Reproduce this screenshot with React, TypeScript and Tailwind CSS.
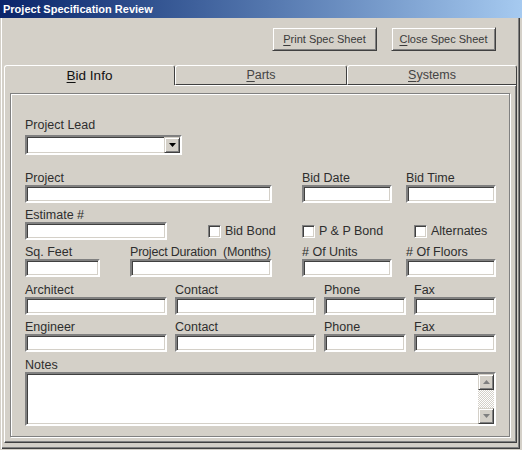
import React from "react";

const U = ({ c }: { c: string }) => (
  <span className="underline underline-offset-[2px] decoration-[1px]">{c}</span>
);

const sunken =
  "bg-white border-2 border-t-[#808080] border-l-[#808080] border-b-white border-r-white shadow-[inset_1px_1px_0_#404040,inset_-1px_-1px_0_#d4d0c8]";

const raised =
  "bg-[#d4d0c8] border border-t-[#d4d0c8] border-l-[#d4d0c8] border-b-[#404040] border-r-[#404040] shadow-[inset_1px_1px_0_#fff,inset_-1px_-1px_0_#808080]";

function Field({ label, cls, lcls = "" }: { label: string; cls: string; lcls?: string }) {
  return (
    <div className={"flex flex-col " + cls}>
      <span className={"h-[14px] leading-[14px] whitespace-pre " + lcls}>{label}</span>
      <div className={"h-[18px] w-full " + sunken} />
    </div>
  );
}

function Check({ label, cls }: { label: string; cls: string }) {
  return (
    <div className={"flex items-center h-[18px] " + cls}>
      <div className="w-[13px] h-[13px] bg-white border border-t-[#808080] border-l-[#808080] border-b-white border-r-white shadow-[inset_1px_1px_0_#404040,inset_-1px_-1px_0_#d4d0c8]" />
      <span className="ml-[4px] leading-[14px] whitespace-nowrap">{label}</span>
    </div>
  );
}

function Arrow({ up, color }: { up?: boolean; color: string }) {
  return (
    <svg width="7" height="4" viewBox="0 0 7 4" className="block">
      {up ? (
        <polygon points="3.5,0 7,4 0,4" fill={color} />
      ) : (
        <polygon points="0,0 7,0 3.5,4" fill={color} />
      )}
    </svg>
  );
}

export default function App() {
  return (
    <div className="w-[522px] h-[450px] bg-[#d4d0c8] font-['Liberation_Sans',Arial,sans-serif] text-[12.5px] text-[#2e2e2e] overflow-hidden">
      <div className="h-[18px] w-[522px] bg-linear-to-r from-[#0a246a] to-[#a6caf0] flex items-center pl-[3px] text-white font-bold text-[11px] leading-[18px]">
        Project Specification Review
      </div>
      <div className="w-[520px] h-[431px] flex flex-col shadow-[inset_1px_0_0_#d4d0c8,inset_2px_0_0_#fff,inset_-1px_-1px_0_#404040,inset_-2px_-2px_0_#808080]">
        {/* buttons */}
        <div className="flex justify-end gap-[14px] pr-[24px] mt-[9px]">
          <button className={"w-[105px] h-[24px] flex items-center justify-center text-[11px] text-[#3a3a3a] " + raised}>
            <U c="P" />rint Spec Sheet
          </button>
          <button className={"w-[105px] h-[24px] flex items-center justify-center text-[11px] text-[#3a3a3a] " + raised}>
            <U c="C" />lose Spec Sheet
          </button>
        </div>
        {/* tabs */}
        <div className="flex ml-[4px] mt-[14px] h-[20px]">
          <div className="w-[171px] h-[20px] border-l border-t border-r border-l-white border-t-white border-r-[#404040] rounded-t-[3px] flex items-center justify-center text-[13.5px] text-[#111] pt-[1px]">
            <U c="B" />id Info
          </div>
          <div className="w-[172px] h-[20px] border border-l-white border-t-white border-r-[#404040] border-b-[#404040] rounded-t-[3px] flex items-center justify-center text-[#444] pt-[1px]">
            <U c="P" />arts
          </div>
          <div className="w-[170px] h-[20px] border border-l-white border-t-white border-r-[#404040] border-b-[#404040] rounded-t-[3px] flex items-center justify-center text-[#444] pt-[1px]">
            <U c="S" />ystems
          </div>
        </div>
        {/* panel */}
        <div className="ml-[4px] w-[513px] h-[358px] border-l border-r border-b border-l-white border-r-[#404040] border-b-[#404040] shadow-[inset_-1px_-1px_0_#808080] flex flex-col">
          <div className="flex h-px">
            <div className="w-[170px]" />
            <div className="flex-1 bg-white" />
          </div>
          <div className="ml-[5px] mt-[7px] w-[500px] h-[344px] border border-[#808080] shadow-[inset_1px_1px_0_#fff,1px_1px_0_#fff] pl-[14px] pt-[24px] flex flex-col">
            {/* row 0 */}
            <div className="flex flex-col">
              <span className="h-[14px] leading-[14px]">Project Lead</span>
              <div className={"mt-[3px] w-[157px] h-[20px] flex justify-end " + sunken}>
                <div className={"w-[16px] h-[16px] flex items-center justify-center " + raised}>
                  <Arrow color="#000" />
                </div>
              </div>
            </div>
            {/* row 1 */}
            <div className="flex mt-[16px]">
              <Field label="Project" cls="w-[247px]" />
              <Field label="Bid Date" cls="ml-[30px] w-[90px]" />
              <Field label="Bid Time" cls="ml-[14px] w-[90px]" />
            </div>
            {/* row 2 */}
            <div className="flex items-end mt-[5px]">
              <Field label="Estimate #" cls="w-[142px]" />
              <Check label="Bid Bond" cls="ml-[41px] w-[94px]" />
              <Check label="P & P Bond" cls="w-[112px]" />
              <Check label="Alternates" cls="" />
            </div>
            {/* row 3 */}
            <div className="flex mt-[5px]">
              <Field label="Sq. Feet" cls="w-[75px]" />
              <Field label="Project Duration  (Months)" cls="ml-[30px] w-[142px]" lcls="tracking-[-0.2px]" />
              <Field label="# Of Units" cls="ml-[30px] w-[90px]" />
              <Field label="# Of Floors" cls="ml-[14px] w-[90px]" />
            </div>
            {/* row 4 */}
            <div className="flex mt-[6px]">
              <Field label="Architect" cls="w-[142px]" />
              <Field label="Contact" cls="ml-[8px] w-[141px]" />
              <Field label="Phone" cls="ml-[8px] w-[82px]" />
              <Field label="Fax" cls="ml-[8px] w-[82px]" />
            </div>
            {/* row 5 */}
            <div className="flex mt-[5px]">
              <Field label="Engineer" cls="w-[142px]" />
              <Field label="Contact" cls="ml-[8px] w-[141px]" />
              <Field label="Phone" cls="ml-[8px] w-[82px]" />
              <Field label="Fax" cls="ml-[8px] w-[82px]" />
            </div>
            {/* notes */}
            <div className="flex flex-col mt-[6px]">
              <span className="h-[14px] leading-[14px]">Notes</span>
              <div className={"w-[471px] h-[54px] flex " + sunken}>
                <div className="flex-1" />
                <div className="w-[16px] h-full flex flex-col">
                  <div className={"w-[16px] h-[16px] flex items-center justify-center " + raised}>
                    <Arrow up color="#808080" />
                  </div>
                  <div className="flex-1 bg-[repeating-conic-gradient(#d4d0c8_0%_25%,#fff_0%_50%)] bg-size-[2px_2px]" />
                  <div className={"w-[16px] h-[16px] flex items-center justify-center " + raised}>
                    <Arrow color="#808080" />
                  </div>
                </div>
              </div>
            </div>
          </div>
        </div>
      </div>
    </div>
  );
}
